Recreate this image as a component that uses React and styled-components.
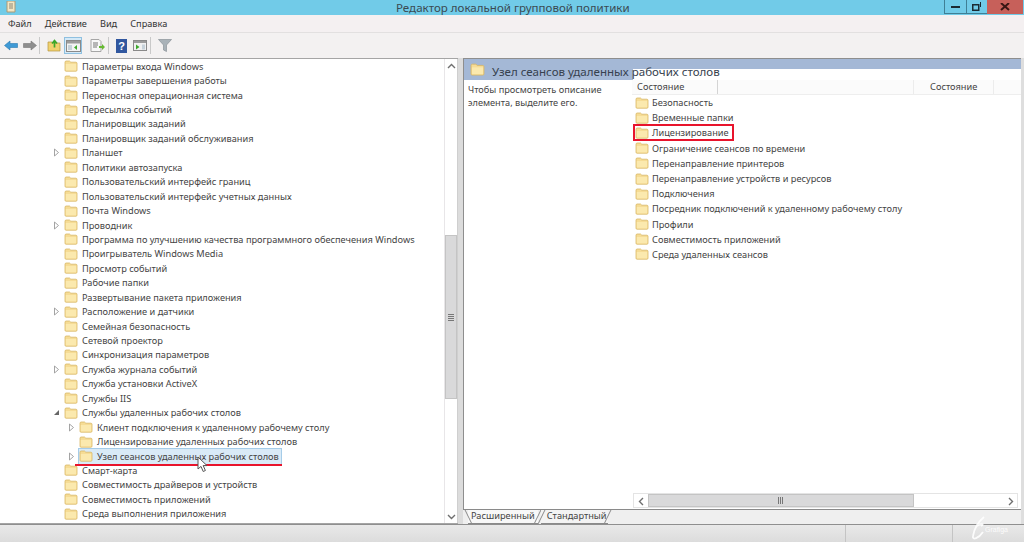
import React from "react";
import styled, { createGlobalStyle } from "styled-components";

const Global = createGlobalStyle`
  html, body { margin: 0; padding: 0; width: 1024px; height: 542px; overflow: hidden; background: #f0f0f0; }
  * { box-sizing: border-box; }
  body { font-family: "Noto Sans", "Open Sans", sans-serif; color: #3c3c3c; }
`;

const Page = styled.div`
  width: 1024px; height: 542px; display: flex; flex-direction: column; position: relative; overflow: hidden; background: #f1efef;
`;
const TitleBar = styled.header`
  height: 15px; flex: none; display: flex; align-items: center; background: #71cbe8; padding-left: 5px;
`;
const TitleText = styled.div`
  margin-left: 379px; font-size: 11.55px; line-height: 14px; color: #3b4a52; white-space: nowrap;
`;
const WindowButtons = styled.div`
  margin-left: auto; margin-right: 1px; display: flex; height: 14px; align-self: flex-start;
`;
const WinBtn = styled.div`
  width: ${p => p.$w}px; height: 14px; display: flex; align-items: center; justify-content: center;
  background: ${p => p.$close ? "#c7605a" : "transparent"};
  border-left: ${p => p.$close ? "none" : "1px solid #3f7f95"};
  border-bottom: ${p => p.$close ? "none" : "1px solid #3f7f95"};
`;
const MenuBar = styled.nav`
  height: 18px; flex: none; display: flex; align-items: center; gap: 13px; padding-left: 8px; font-size: 9.2px; background: #f4f0f1; border-bottom: 1px solid #e2e0e0; color: #333;
`;
const Toolbar = styled.div`
  height: 25px; flex: none; display: flex; align-items: center; padding-left: 1px; background: #f3f1f1;
`;
const ToolBtn = styled.div`
  width: ${p => p.$w || 19}px; height: 17px; flex: none; display: flex; align-items: center; justify-content: center;
  ${p => p.$active && "background:#d4e9f7;border:1px solid #8fc0e0;"}
`;
const ToolSep = styled.div`
  width: 1px; height: 17px; flex: none; background: #c9c9c9; margin: 0 ${p => p.$r}px 0 ${p => p.$l}px;
`;
const Main = styled.main`
  flex: 1; min-height: 0; display: flex; background: #dedede; padding-right: 3px;
`;
const TreePane = styled.section`
  width: 458px; flex: none; display: flex; background: #fff; border-top: 1px solid #a5a5a5; border-bottom: 1px solid #a5a5a5;
`;
const TreeList = styled.ul`
  flex: 1; margin: 0; padding: 0; list-style: none; overflow: hidden;
`;
const RowEl = styled.li`
  height: 14.45px; display: flex; align-items: center; padding-left: ${p => p.$depth === 2 ? 65 : 50}px; font-size: 9.23px; white-space: nowrap; color: #444;
`;
const Expander = styled.span`
  width: 12px; margin-right: 2px; flex: none; display: flex; align-items: center; justify-content: center;
`;
const NodeLabel = styled.span`
  margin-left: 4px; height: 13px; line-height: 13px; padding-right: ${p => p.$sel ? 2 : 0}px;
`;
const SelectedWrap = styled.span`
  display: inline-flex; align-items: center; height: 15px; position: relative;
  background: #d9eaf7; outline: 1px solid #a6cce8;
`;
const Underline = styled.i`
  position: absolute; left: -4px; top: 15px; width: 207px; height: 2px; background: #e8142c;
`;
const CursorMark = styled.svg`
  position: absolute; left: 118px; top: 7px;
`;
const VScroll = styled.div`
  width: 14px; flex: none; display: flex; flex-direction: column; background: #fff; border-left: 1px solid #e8e6e8; border-right: 1px solid #cfcfcf;
`;
const ScrollArrow = styled.div`
  height: ${p => p.$h || 14}px; flex: none; display: flex; align-items: center; justify-content: center; color: #777;
  ${p => p.$w && `width:${p.$w}px;height:14px;`}
`;
const VTrack = styled.div`
  flex: 1; display: flex; flex-direction: column; padding-top: 162px; padding-bottom: 110px;
`;
const Thumb = styled.div`
  flex: 1; display: flex; align-items: center; justify-content: center; background: #d9d9da; border: 1px solid #c4c4c4;
`;
const Grip = styled.span`
  width: 6px; height: 7px; background: repeating-linear-gradient(${p => p.$h ? "90deg" : "0deg"}, #777 0 1px, transparent 1px 2px);
`;
const Gutter = styled.div`
  width: 5px; flex: none; background: #dcdcdc;
`;
const RightPane = styled.section`
  flex: 1; min-width: 0; display: flex; flex-direction: column; background: #fff; border-top: 1px solid #8e8e8e; border-left: 1px solid #8e8e8e;
`;
const PaneHeader = styled.div`
  height: 21px; flex: none; position: relative; display: flex; align-items: center; padding: 2px 0 0 6px;
  background: #a4b8d6;
`;
const HeaderWhite = styled.div`
  position: absolute; left: 169px; right: 0; top: 10px; bottom: 0; background: #fff;
`;
const HeaderText = styled.div`
  position: relative; margin: 2px 0 0 7px; font-size: 11.55px; color: #37424f; white-space: nowrap;
`;
const HeaderFolder = styled.span`
  position: relative; display: flex; margin-top: -2px;
`;
const PaneBody = styled.div`
  flex: 1; min-height: 0; display: flex;
`;
const Description = styled.p`
  width: 168px; flex: none; margin: 0; padding: 3px 4px; font-size: 9.2px; line-height: 13px; color: #444;
`;
const ListArea = styled.div`
  flex: 1; min-width: 0; display: flex; flex-direction: column;
`;
const ColHeader = styled.div`
  height: 15px; flex: none; display: flex; font-size: 9.23px; line-height: 14px; color: #444; border-bottom: 1px solid #eeeeee; background: #fbfbfb;
`;
const Col = styled.div`
  width: ${p => p.$w}px; flex: ${p => p.$w ? "none" : 1}; padding-left: ${p => p.$pl || 5}px;
  border-right: ${p => p.$last ? "none" : `1px solid ${p.$soft ? "#ececec" : "#d4d4d4"}`};
`;
const ItemList = styled.ul`
  flex: 1; margin: 0; padding: 0 0 0 3px; list-style: none;
`;
const Item = styled.li`
  height: 15.2px; display: flex; align-items: center; font-size: 9.23px; color: #444; white-space: nowrap;
`;
const ItemInner = styled.span`
  display: inline-flex; align-items: center; height: 15px; padding-right: 4px; margin-left: -1px; padding-left: 1px;
  ${p => p.$mark && "outline: 2px solid #e8142c; outline-offset: -1px; background:#fff;"}
`;
const ItemLabel = styled.span` margin-left: 3px; `;
const HScroll = styled.div`
  height: 15px; flex: none; display: flex; align-items: stretch; margin: 0 3px 1px 1px; border: 1px solid #e4e4e4;
`;
const HTrack = styled.div`
  flex: 1; display: flex; padding-right: 89px;
`;
const TabBar = styled.div`
  height: 15px; flex: none; display: flex; align-items: flex-start; border-top: 1px solid #8a8a8a; background: #efefef; padding-left: 5px; font-size: 9.23px; margin-left: -1px;
`;
const Tab = styled.div`
  position: relative; height: 14px; line-height: 12px; padding: 0 ${p => p.$pr}px 0 ${p => p.$pl}px; margin-left: ${p => p.$ml || 0}px; color: #444;
  background: ${p => p.$active ? "#f8f8f8" : "#f3f3f3"};
  border-bottom: 1px solid #8a8a8a; white-space: nowrap;
  &::before, &::after { content: ""; position: absolute; top: 0; bottom: -1px; width: 1px; background: #8a8a8a; }
  &::before { left: 0; transform: skewX(${p => p.$active ? 26 : -26}deg); }
  &::after { right: 0; transform: skewX(-26deg); }
`;
const StatusBar = styled.footer`
  height: 18px; flex: none; display: flex; background: linear-gradient(#e9e9e9, #dcdcdc); border-top: 1px solid #8f8f8f;
`;
const StatusCell = styled.div`
  width: ${p => p.$w}px; flex: ${p => p.$w ? "none" : 1}; border-right: ${p => p.$last ? "none" : "1px solid #c4c4c4"};
`;
const Watermark = styled.svg`
  position: absolute; right: 8px; bottom: 0; opacity: .9;
`;

const Folder = ({ s = 12 }) => (
  <svg width={s + 2} height={s} viewBox="0 0 14 12" style={{ flex: "none" }}>
    <path d="M1 2.2 C1 1.4 1.5 1 2.2 1 H5.5 L6.8 2.2 H12 C12.6 2.2 13 2.7 13 3.3 V10.2 C13 10.8 12.6 11.2 12 11.2 H2 C1.4 11.2 1 10.8 1 10.2 Z" fill="#f6dc95" stroke="#d8b767" strokeWidth=".8" />
    <path d="M1.8 4 H12.2 V10.4 H1.8 Z" fill="#fbe9ae" />
  </svg>
);
const Tri = ({ open }) => (
  <svg width="7" height="9" viewBox="0 0 7 9">
    {open ? <path d="M6 2 V7 H1 Z" fill="#666" /> : <path d="M1.5 1 L5.5 4.5 L1.5 8 Z" fill="#fff" stroke="#9a9a9a" strokeWidth=".9" />}
  </svg>
);
const Chevron = ({ dir }) => {
  const d = { up: "M1 6 L4.5 2.5 L8 6", down: "M1 3 L4.5 6.5 L8 3", left: "M6 1 L2.5 4.5 L6 8", right: "M3 1 L6.5 4.5 L3 8" }[dir];
  return <svg width="9" height="9" viewBox="0 0 9 9"><path d={d} fill="none" stroke="#6f6f6f" strokeWidth="1.4" /></svg>;
};

const tree = [
  ["Параметры входа Windows"], ["Параметры завершения работы"], ["Переносная операционная система"], ["Пересылка событий"],
  ["Планировщик заданий"], ["Планировщик заданий обслуживания"], ["Планшет", 1], ["Политики автозапуска"],
  ["Пользовательский интерфейс границ"], ["Пользовательский интерфейс учетных данных"], ["Почта Windows"], ["Проводник", 1],
  ["Программа по улучшению качества программного обеспечения Windows"], ["Проигрыватель Windows Media"], ["Просмотр событий"],
  ["Рабочие папки"], ["Развертывание пакета приложения"], ["Расположение и датчики", 1], ["Семейная безопасность"], ["Сетевой проектор"],
  ["Синхронизация параметров"], ["Служба журнала событий", 1], ["Служба установки ActiveX"], ["Службы IIS"],
  ["Службы удаленных рабочих столов", 2], ["Клиент подключения к удаленному рабочему столу", 1, 2],
  ["Лицензирование удаленных рабочих столов", 0, 2], ["Узел сеансов удаленных рабочих столов", 1, 2, true], ["Смарт-карта"],
  ["Совместимость драйверов и устройств"], ["Совместимость приложений"], ["Среда выполнения приложения"],
];
const items = ["Безопасность", "Временные папки", "Лицензирование", "Ограничение сеансов по времени", "Перенаправление принтеров",
  "Перенаправление устройств и ресурсов", "Подключения", "Посредник подключений к удаленному рабочему столу", "Профили", "Совместимость приложений", "Среда удаленных сеансов"];

const TreeNode = ({ label, exp, depth, sel }) => (
  <RowEl $depth={depth}>
    <Expander>{exp ? <Tri open={exp === 2} /> : null}</Expander>
    {sel ? (
      <SelectedWrap>
        <Folder />
        <NodeLabel $sel>{label}</NodeLabel>
        <Underline />
        <CursorMark width="12" height="17" viewBox="0 0 12 17">
          <path d="M1 1 V13 L4 10.4 L6.2 15.5 L8.4 14.5 L6.2 9.6 H10 Z" fill="#fff" stroke="#555" strokeWidth="1" />
        </CursorMark>
      </SelectedWrap>
    ) : (
      <><Folder /><NodeLabel>{label}</NodeLabel></>
    )}
  </RowEl>
);

export default function App() {
  return (
    <Page>
      <Global />
      <TitleBar>
        <svg width="12" height="13" viewBox="0 0 12 13"><path d="M2 0 H10 V11 H2 Z" fill="#f2e6c4" stroke="#a99a78" /><path d="M4 3 H8 M4 5 H8 M4 7 H8" stroke="#8d8674" /></svg>
        <TitleText>Редактор локальной групповой политики</TitleText>
        <WindowButtons>
          <WinBtn $w={22}><svg width="9" height="3"><rect width="9" height="2" y="1" fill="#1b2a33" /></svg></WinBtn>
          <WinBtn $w={21}><svg width="10" height="9"><rect x=".75" y="2.75" width="6" height="5.5" fill="none" stroke="#1b2a33" strokeWidth="1.5" /><path d="M8.5 0 V5" stroke="#1b2a33" /></svg></WinBtn>
          <WinBtn $w={36} $close><svg width="10" height="8"><path d="M1 0 L9 7 M9 0 L1 7" stroke="#3a1715" strokeWidth="2" /></svg></WinBtn>
        </WindowButtons>
      </TitleBar>
      <MenuBar><span>Файл</span><span>Действие</span><span>Вид</span><span>Справка</span></MenuBar>
      <Toolbar>
        <ToolBtn><svg width="14" height="11" viewBox="0 0 14 11"><path d="M0.5 5.5 L6 1 V3.5 H13.5 V7.5 H6 V10 Z" fill="#3f9ad6" stroke="#2a78b0" strokeWidth=".6" /></svg></ToolBtn>
        <ToolBtn><svg width="14" height="11" viewBox="0 0 14 11"><path d="M13.5 5.5 L8 1 V3.5 H.5 V7.5 H8 V10 Z" fill="#8e8e8e" stroke="#777" strokeWidth=".6" /></svg></ToolBtn>
        <ToolSep $l={0} $r={4} />
        <ToolBtn $w={20}><svg width="14" height="13" viewBox="0 0 14 13"><path d="M1 3 H5 L6 4 H13 V12 H1 Z" fill="#f1d26f" stroke="#b4953f" strokeWidth=".7" /><path d="M7.5 8.5 V2.5 M5 4.5 L7.5 1.5 L10 4.5" fill="none" stroke="#3ca82c" strokeWidth="1.7" /></svg></ToolBtn>
        <ToolBtn $active $w={18}><svg width="15" height="12" viewBox="0 0 15 12"><rect x=".5" y=".5" width="14" height="11" fill="#f3f3f3" stroke="#8a8a8a" /><rect x="1" y="1" width="13" height="2.5" fill="#9c9c9c" /><rect x="2" y="5" width="4" height="5" fill="#c7d2da" /><path d="M11 5 L8 7.5 L11 10 Z" fill="#3ca82c" /></svg></ToolBtn>
        <ToolBtn $w={6} />
        <ToolBtn $w={18}><svg width="15" height="13" viewBox="0 0 15 13"><path d="M1 .5 H9 L11 2.5 V12.5 H1 Z" fill="#f8f8f8" stroke="#a6a6a6" /><path d="M3 4 H8 M3 6 H8 M3 8 H7" stroke="#777" /><path d="M9 7 H12 V5 L15 8 L12 11 V9 H9 Z" fill="#66b832" /></svg></ToolBtn>
        <ToolSep $l={2} $r={4} />
        <ToolBtn $w={16}><svg width="11" height="14" viewBox="0 0 11 14"><rect width="11" height="14" fill="#31579f" /><text x="5.5" y="11" fontSize="11" fontFamily="Liberation Sans" fontWeight="700" fill="#fff" textAnchor="middle">?</text></svg></ToolBtn>
        <ToolBtn $w={21}><svg width="14" height="11" viewBox="0 0 14 11"><rect x=".5" y=".5" width="13" height="10" fill="#f1f1f1" stroke="#8a8a8a" /><rect x="1" y="1" width="12" height="2" fill="#9c9c9c" /><path d="M3 4.5 L6.5 7 L3 9.5 Z" fill="#3ca82c" /><rect x="9" y="4.5" width="3" height="5" fill="#c7d2da" /></svg></ToolBtn>
        <ToolSep $l={0} $r={4} />
        <ToolBtn $w={20}><svg width="14" height="13" viewBox="0 0 14 13"><path d="M.5 .5 H13.5 L8.5 6 V12.5 L5.5 11 V6 Z" fill="#a9b2b8" stroke="#8b9399" strokeWidth=".7" /></svg></ToolBtn>
      </Toolbar>
      <Main>
        <TreePane>
          <TreeList>
            {tree.map(([l, e, d, s]) => <TreeNode key={l} label={l} exp={e} depth={d} sel={s} />)}
          </TreeList>
          <VScroll>
            <ScrollArrow><Chevron dir="up" /></ScrollArrow>
            <VTrack><Thumb><Grip /></Thumb></VTrack>
            <ScrollArrow><Chevron dir="down" /></ScrollArrow>
          </VScroll>
        </TreePane>
        <Gutter />
        <RightPane>
          <PaneHeader>
            <HeaderWhite />
            <HeaderFolder><Folder s={13} /></HeaderFolder>
            <HeaderText>Узел сеансов удаленных рабочих столов</HeaderText>
          </PaneHeader>
          <PaneBody>
            <Description>Чтобы просмотреть описание<br />элемента, выделите его.</Description>
            <ListArea>
              <ColHeader>
                <Col $w={86}>Состояние</Col>
                <Col $w={196} $soft />
                <Col $w={80} $pl={16} $soft>Состояние</Col>
                <Col $last />
              </ColHeader>
              <ItemList>
                {items.map(t => (
                  <Item key={t}>
                    <ItemInner $mark={t === "Лицензирование"}>
                      <Folder />
                      <ItemLabel>{t}</ItemLabel>
                    </ItemInner>
                  </Item>
                ))}
              </ItemList>
              <HScroll>
                <ScrollArrow $w={14}><Chevron dir="left" /></ScrollArrow>
                <HTrack><Thumb><Grip $h /></Thumb></HTrack>
                <ScrollArrow $w={14}><Chevron dir="right" /></ScrollArrow>
              </HScroll>
            </ListArea>
          </PaneBody>
          <TabBar>
            <Tab $active $pl={3} $pr={3}>Расширенный</Tab>
            <Tab $ml={3} $pl={6} $pr={1}>Стандартный</Tab>
          </TabBar>
        </RightPane>
      </Main>
      <StatusBar>
        <StatusCell $w={846} />
        <StatusCell $w={107} />
        <StatusCell $last />
      </StatusBar>
      <Watermark width="45" height="26" viewBox="0 0 45 26">
        <path d="M13 1 C7 6 3 14 2 20 C1 25 8 22 12 16 M6 10 C10 7 14 8 10 10" fill="none" stroke="#fff" strokeWidth="1.8" />
        <text x="14" y="16" fontSize="7" fill="#fff" fontFamily="Liberation Sans">Grafiga</text>
      </Watermark>
    </Page>
  );
}
